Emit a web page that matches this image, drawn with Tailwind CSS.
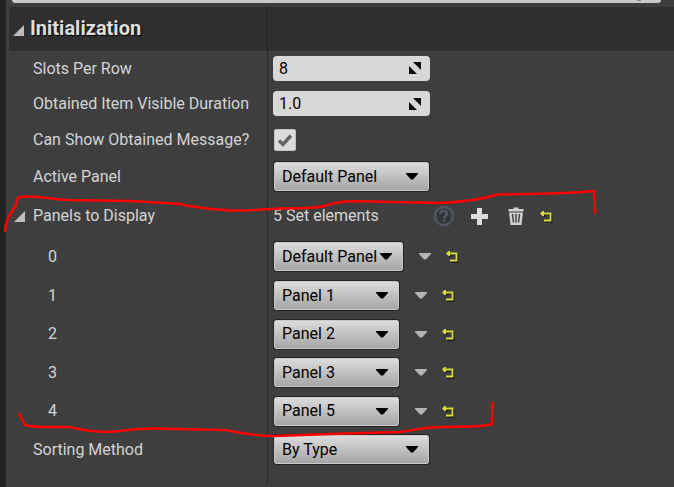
<!DOCTYPE html>
<html lang="en">
  <head>
    <meta charset="UTF-8" />
    <title>Details - Initialization</title>
    <script src="https://cdn.jsdelivr.net/npm/@tailwindcss/browser@4"></script>
  </head>
  <body class="relative flex min-h-screen bg-[#3e3e3e] font-['Roboto','Liberation_Sans',sans-serif] text-base text-[#d4d4d4]">
    <!-- shared icons -->
    <svg class="hidden">
      <symbol id="caret" viewBox="0 0 12 7"><path d="M0 0h12v1L7 6.500H5L0 1z" fill="currentColor" /></symbol>
      <symbol id="expander" viewBox="0 0 11 11"><path d="M11 0v11H0z" fill="#bdbdbd" /></symbol>
      <symbol id="spin" viewBox="0 0 14 14"><path d="M5 1h8v8zM1 5l8 8H1z" fill="#0c0c0c" /></symbol>
      <symbol id="reset" viewBox="0 0 14 13">
        <path d="M2 4.500h9.500v7.500H5M4.500 2V7" fill="none" stroke="#151515" stroke-width="1.500" />
        <path d="M1 3.500h9.500v7H4" fill="none" stroke="#d6da3c" stroke-width="1.800" />
        <path d="M0 3.500L2.500 1H4v5H2.500z" fill="#d6da3c" />
      </symbol>
    </svg>

    <div class="w-[6px] shrink-0 bg-[#222222]"></div>

    <div class="grow pl-[3px]">
      <!-- bottom edge of the search bar -->
      <div class="h-[7px]">
        <div class="ml-[3px] mr-[13px] h-[3px] rounded-b bg-[#c9c9c9] flex justify-end pr-5"><span class="w-1 h-px bg-[#888]"></span></div>
      </div>

      <main>
        <div class="flex h-[44px] bg-[#2f2f2f] rounded-tl">
          <div class="w-[259px] shrink-0 border-r border-[#222222] flex items-center gap-[6px] pl-1">
            <svg class="size-[11px] mt-[3px]"><use href="#expander" /></svg>
            <h2 class="text-xl font-bold text-[#dedede] pb-[2px] [text-shadow:1px_1px_1px_#000]">Initialization</h2>
          </div>
        </div>

        <div class="flex h-[35px]">
          <div class="w-[259px] shrink-0 border-r border-[#2a2a2a] flex items-center pl-6"><label for="slots">Slots Per Row</label></div>
          <div class="flex items-center pl-[5px]">
            <div class="relative">
              <input id="slots" type="text" value="8" class="block w-[157px] h-[25px] rounded bg-[#d8d8d8] px-[6px] text-black" />
              <svg class="absolute right-2 top-[5px] size-[14px] pointer-events-none"><use href="#spin" /></svg>
            </div>
          </div>
        </div>

        <div class="flex h-[35px]">
          <div class="w-[259px] shrink-0 border-r border-[#2a2a2a] flex items-center pl-6"><label for="duration">Obtained Item Visible Duration</label></div>
          <div class="flex items-center pl-[5px]">
            <div class="relative">
              <input id="duration" type="text" value="1.0" class="block w-[157px] h-[25px] rounded bg-[#d8d8d8] px-[6px] text-black" />
              <svg class="absolute right-2 top-[6px] size-[14px] pointer-events-none"><use href="#spin" /></svg>
            </div>
          </div>
        </div>

        <div class="flex h-[37px]">
          <div class="w-[259px] shrink-0 border-r border-[#2a2a2a] flex items-center pl-6"><label for="message">Can Show Obtained Message?</label></div>
          <div class="flex items-center pl-[6px]">
            <div class="relative">
              <input id="message" type="checkbox" checked class="block appearance-none size-[22px] rounded-xs bg-[#dcdcdc] border border-[#c4c4c4]" />
              <svg class="absolute inset-0 size-[22px] pointer-events-none" viewBox="0 0 22 22"><path d="M5 11.500l4 4 8-9" fill="none" stroke="#666" stroke-width="3.500" /></svg>
            </div>
          </div>
        </div>

        <div class="flex h-[37px]">
          <div class="w-[259px] shrink-0 border-r border-[#2a2a2a] flex items-center pl-6"><label for="active">Active Panel</label></div>
          <div class="flex items-center pl-[6px]">
            <div class="relative text-black">
              <select id="active" class="block appearance-none w-[155px] h-[29px] rounded-xs border border-[#c9c9c9] bg-linear-to-b from-[#dcdcdc] to-[#a6a6a6] pl-[7px] outline outline-[#242424]">
                <option>Default Panel</option>
              </select>
              <svg class="absolute right-[11px] top-[11px] w-3 h-[7px] pointer-events-none"><use href="#caret" /></svg>
            </div>
          </div>
        </div>

        <div class="flex h-[42px]">
          <div class="w-[259px] shrink-0 border-r border-[#2a2a2a] flex items-center gap-2 pl-[5px]">
            <button type="button" aria-label="Collapse"><svg class="size-[11px]"><use href="#expander" /></svg></button>
            <span>Panels to Display</span>
          </div>
          <div class="flex items-center pl-[5px]">
            <span class="w-[160px]">5 Set elements</span>
            <button type="button" aria-label="Help">
              <svg class="size-[22px]" viewBox="0 0 22 22" fill="none">
                <circle cx="11" cy="11" r="9" fill="#333437" stroke="#505662" stroke-width="2.500" />
                <path d="M7.500 9C7.500 4.800 14 4.800 14 8.500C14 11 11 10.800 11 13.500M11 14.800v2.200" stroke="#505662" stroke-width="2.500" />
              </svg>
            </button>
            <button type="button" aria-label="Add" class="ml-4">
              <svg class="size-[17px]" viewBox="0 0 17 17"><path d="M6 0h5v6h6v5h-6v6H6v-6H0V6h6z" fill="#dcdcdc" /></svg>
            </button>
            <button type="button" aria-label="Remove all" class="ml-5">
              <svg class="w-4 h-[18px]" viewBox="0 0 16 18">
                <path d="M5.500 2V.500h5V2H15.500v2.500H.500V2zM1 5.500h14L13.500 18h-11z" fill="#d0d0d0" />
                <path d="M4.500 7l1 8.500M8 7v8.500M11.500 7l-1 8.500" fill="none" stroke="#444" stroke-width="1.500" />
              </svg>
            </button>
            <button type="button" aria-label="Reset" class="ml-4"><svg class="w-[14px] h-[13px]"><use href="#reset" /></svg></button>
          </div>
        </div>

        <div class="flex h-[39px]">
          <div class="w-[259px] shrink-0 border-r border-[#2a2a2a] flex items-center pl-[39px]"><label for="panel0">0</label></div>
          <div class="flex items-center pl-[6px]">
            <div class="relative text-black">
              <select id="panel0" class="block appearance-none w-[129px] h-[29px] rounded-xs border border-[#c9c9c9] bg-linear-to-b from-[#dcdcdc] to-[#a6a6a6] pl-[7px] outline outline-[#242424]">
                <option>Default Panel</option>
              </select>
              <svg class="absolute right-[11px] top-[11px] w-3 h-[7px] pointer-events-none"><use href="#caret" /></svg>
            </div>
            <button type="button" aria-label="Options" class="ml-4 text-[#b4b4b4]"><svg class="w-3 h-[7px]"><use href="#caret" /></svg></button>
            <button type="button" aria-label="Reset" class="ml-[15px]"><svg class="w-[14px] h-[13px]"><use href="#reset" /></svg></button>
          </div>
        </div>

        <div class="flex h-[39px]">
          <div class="w-[259px] shrink-0 border-r border-[#2a2a2a] flex items-center pl-[39px]"><label for="panel1">1</label></div>
          <div class="flex items-center pl-[6px]">
            <div class="relative text-black">
              <select id="panel1" class="block appearance-none w-[125px] h-[29px] rounded-xs border border-[#c9c9c9] bg-linear-to-b from-[#dcdcdc] to-[#a6a6a6] pl-[7px] outline outline-[#242424]">
                <option>Panel 1</option>
              </select>
              <svg class="absolute right-[11px] top-[11px] w-3 h-[7px] pointer-events-none"><use href="#caret" /></svg>
            </div>
            <button type="button" aria-label="Options" class="ml-4 text-[#b4b4b4]"><svg class="w-3 h-[7px]"><use href="#caret" /></svg></button>
            <button type="button" aria-label="Reset" class="ml-[15px]"><svg class="w-[14px] h-[13px]"><use href="#reset" /></svg></button>
          </div>
        </div>

        <div class="flex h-[38px]">
          <div class="w-[259px] shrink-0 border-r border-[#2a2a2a] flex items-center pl-[39px]"><label for="panel2">2</label></div>
          <div class="flex items-center pl-[6px]">
            <div class="relative text-black">
              <select id="panel2" class="block appearance-none w-[125px] h-[29px] rounded-xs border border-[#c9c9c9] bg-linear-to-b from-[#dcdcdc] to-[#a6a6a6] pl-[7px] outline outline-[#242424]">
                <option>Panel 2</option>
              </select>
              <svg class="absolute right-[11px] top-[11px] w-3 h-[7px] pointer-events-none"><use href="#caret" /></svg>
            </div>
            <button type="button" aria-label="Options" class="ml-4 text-[#b4b4b4]"><svg class="w-3 h-[7px]"><use href="#caret" /></svg></button>
            <button type="button" aria-label="Reset" class="ml-[15px]"><svg class="w-[14px] h-[13px]"><use href="#reset" /></svg></button>
          </div>
        </div>

        <div class="flex h-[39px]">
          <div class="w-[259px] shrink-0 border-r border-[#2a2a2a] flex items-center pl-[39px]"><label for="panel3">3</label></div>
          <div class="flex items-center pl-[6px]">
            <div class="relative text-black">
              <select id="panel3" class="block appearance-none w-[125px] h-[29px] rounded-xs border border-[#c9c9c9] bg-linear-to-b from-[#dcdcdc] to-[#a6a6a6] pl-[7px] outline outline-[#242424]">
                <option>Panel 3</option>
              </select>
              <svg class="absolute right-[11px] top-[11px] w-3 h-[7px] pointer-events-none"><use href="#caret" /></svg>
            </div>
            <button type="button" aria-label="Options" class="ml-4 text-[#b4b4b4]"><svg class="w-3 h-[7px]"><use href="#caret" /></svg></button>
            <button type="button" aria-label="Reset" class="ml-[15px]"><svg class="w-[14px] h-[13px]"><use href="#reset" /></svg></button>
          </div>
        </div>

        <div class="flex h-[38px]">
          <div class="w-[259px] shrink-0 border-r border-[#2a2a2a] flex items-center pl-[39px]"><label for="panel4">4</label></div>
          <div class="flex items-center pl-[6px]">
            <div class="relative text-black">
              <select id="panel4" class="block appearance-none w-[125px] h-[29px] rounded-xs border border-[#c9c9c9] bg-linear-to-b from-[#dcdcdc] to-[#a6a6a6] pl-[7px] outline outline-[#242424]">
                <option>Panel 5</option>
              </select>
              <svg class="absolute right-[11px] top-[11px] w-3 h-[7px] pointer-events-none"><use href="#caret" /></svg>
            </div>
            <button type="button" aria-label="Options" class="ml-4 text-[#b4b4b4]"><svg class="w-3 h-[7px]"><use href="#caret" /></svg></button>
            <button type="button" aria-label="Reset" class="ml-[15px]"><svg class="w-[14px] h-[13px]"><use href="#reset" /></svg></button>
          </div>
        </div>

        <div class="flex h-[39px]">
          <div class="w-[259px] shrink-0 border-r border-[#2a2a2a] flex items-center pl-6"><label for="sorting">Sorting Method</label></div>
          <div class="flex items-center pl-[6px]">
            <div class="relative text-black">
              <select id="sorting" class="block appearance-none w-[155px] h-[29px] rounded-xs border border-[#c9c9c9] bg-linear-to-b from-[#dcdcdc] to-[#a6a6a6] pl-[7px] outline outline-[#242424]">
                <option>By Type</option>
              </select>
              <svg class="absolute right-[11px] top-[11px] w-3 h-[7px] pointer-events-none"><use href="#caret" /></svg>
            </div>
          </div>
        </div>
        <div class="w-[259px] h-4 border-r border-[#2a2a2a]"></div>
      </main>
    </div>

    <!-- red pen marks around the set -->
    <svg class="absolute top-0 left-0 w-[674px] h-[487px] pointer-events-none" viewBox="0 0 674 487" fill="none" stroke="#ff0000" stroke-width="2.500" stroke-linecap="round" stroke-linejoin="round">
      <path d="M5 231C5 222 10 214 16 205C17 201 16 198 20 197C35 195 50 199 68 200L130 201C150 202 165 203 180 204C192 207 210 209 225 210C240 212 262 209 280 208.500C300 208 318 209 328 205C338 201 352 201 370 201.500L440 203C462 202 480 200 498 194.500C530 194 565 194 594 191L595 213" />
      <path d="M19 414L25 425C35 428 50 427 68 427C78 428 84 432 105 432C125 431 135 428 155 428.500L225 430C240 433 255 436 275 436L330 434L400 432C415 430 425 427 440 427C460 426 480 428 492 424L492.500 403" />
    </svg>
  </body>
</html>
